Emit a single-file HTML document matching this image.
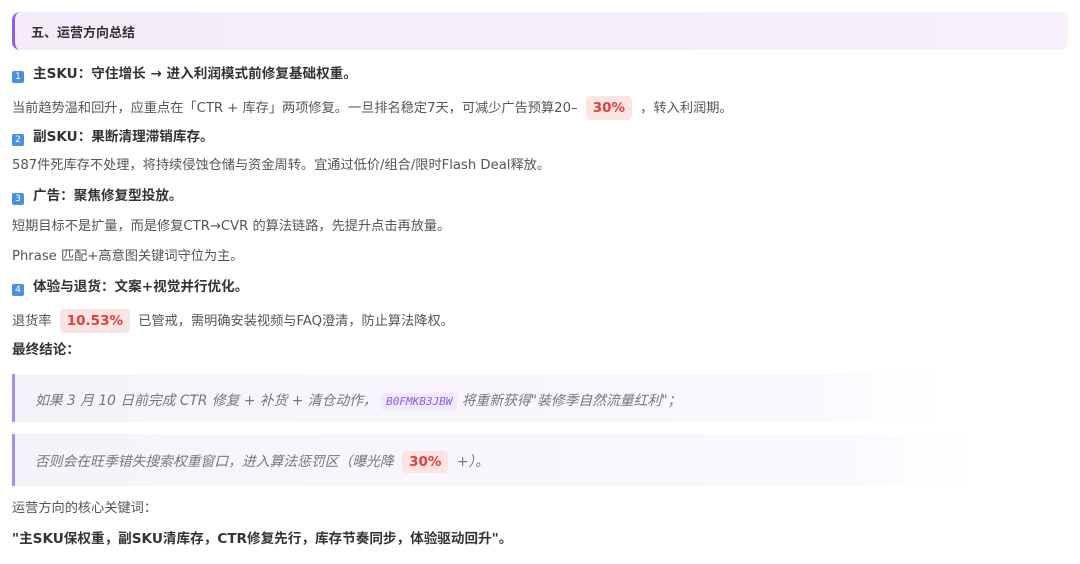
<!DOCTYPE html>
<html><head><meta charset="utf-8"><style>
body{margin:0;width:1080px;height:564px;background:#fff;font-family:"DejaVu Sans","Noto Sans CJK SC",sans-serif;font-size:13.2px;color:#555;position:relative;overflow:hidden}
.l{position:absolute;left:12px;white-space:nowrap;line-height:18px}
.hdr{position:absolute;left:12px;top:12px;width:1056px;height:38px;border-radius:8px;background:linear-gradient(90deg,#f2ecfb,#f6f0fd);border-left:3px solid #8b5cf6;box-sizing:border-box}
.hdr span{position:absolute;left:16px;top:10px;font-weight:bold;color:#333;font-size:13px}
b{color:#333;font-size:13.6px}
.n{display:inline-block;width:12px;height:12px;background:#4a90e2;color:#fff;font-size:9px;line-height:12px;text-align:center;border-radius:2px;margin-right:9px;vertical-align:-1px}
.r{display:inline-block;background:#fde4e4;color:#e0403a;font-weight:bold;padding:3px 7px;border-radius:4px;margin:0 4px;font-size:13.5px}
.bq{position:absolute;left:12px;border-left:3px solid #a78bfa;background:linear-gradient(90deg,#f6f3fb,#faf8fd 85%,#fff);box-sizing:border-box}
.bq>span{position:absolute;left:20px;font-style:italic;color:#777;white-space:nowrap;font-size:13.8px}
.code{font-family:"DejaVu Sans Mono",monospace;color:#8b5cf6;background:#f0eafc;padding:2px 5px;border-radius:3px;font-size:11px}
</style></head><body>
<div class="hdr"><span>五、运营方向总结</span></div>
<div class="l" style="top:65px"><span class="n">1</span><b>主SKU：守住增长 → 进入利润模式前修复基础权重。</b></div>
<div class="l" style="top:96px">当前趋势温和回升，应重点在「CTR + 库存」两项修复。一旦排名稳定7天，可减少广告预算20– <span class="r">30%</span> ，转入利润期。</div>
<div class="l" style="top:128px"><span class="n">2</span><b>副SKU：果断清理滞销库存。</b></div>
<div class="l" style="top:157px">587件死库存不处理，将持续侵蚀仓储与资金周转。宜通过低价/组合/限时Flash Deal释放。</div>
<div class="l" style="top:187px"><span class="n">3</span><b>广告：聚焦修复型投放。</b></div>
<div class="l" style="top:218px">短期目标不是扩量，而是修复CTR→CVR 的算法链路，先提升点击再放量。</div>
<div class="l" style="top:248px">Phrase 匹配+高意图关键词守位为主。</div>
<div class="l" style="top:278px"><span class="n">4</span><b>体验与退货：文案+视觉并行优化。</b></div>
<div class="l" style="top:309px">退货率 <span class="r">10.53%</span> 已管戒，需明确安装视频与FAQ澄清，防止算法降权。</div>
<div class="l" style="top:341px"><b>最终结论：</b></div>
<div class="bq" style="top:374px;width:930px;height:48px"><span style="top:15px">如果 3 月 10 日前完成 CTR 修复 + 补货 + 清仓动作， <span class="code">B0FMKB3JBW</span> 将重新获得"装修季自然流量红利"；</span></div>
<div class="bq" style="top:434px;width:965px;height:52px"><span style="top:16px">否则会在旺季错失搜索权重窗口，进入算法惩罚区（曝光降 <span class="r" style="font-style:normal">30%</span> +）。</span></div>
<div class="l" style="top:500px">运营方向的核心关键词：</div>
<div class="l" style="top:530px"><b>"主SKU保权重，副SKU清库存，CTR修复先行，库存节奏同步，体验驱动回升"。</b></div>
</body></html>
